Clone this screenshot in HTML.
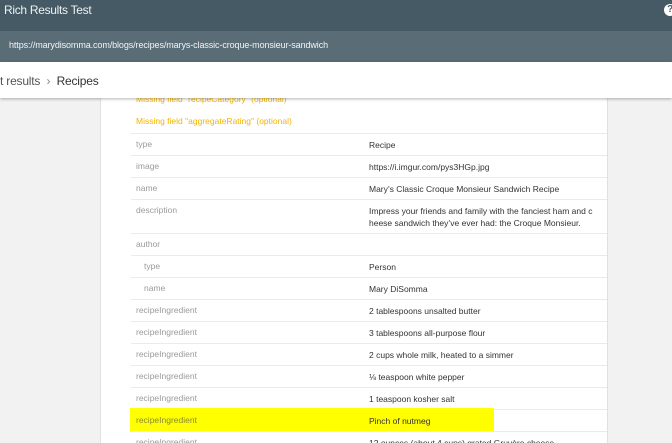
<!DOCTYPE html>
<html><head><style>
*{margin:0;padding:0;box-sizing:border-box}
html,body{width:672px;height:443px;overflow:hidden}
body{background:#f2f2f2;font-family:"Liberation Sans",sans-serif;position:relative}
.top{position:absolute;left:0;top:0;width:672px;height:31px;background:#455a64;color:#eef1f2;font-size:12px;letter-spacing:-0.3px;padding:3px 0 0 4px}
.url{position:absolute;left:0;top:31px;width:672px;height:31px;background:#5a6d77;color:#f2f4f5;font-size:9px;letter-spacing:-0.1px;padding:9px 0 0 9px}
.q{position:absolute;right:-4px;top:4px;width:12px;height:12px;border-radius:50%;background:#fff;color:#455a64;font-size:10px;font-weight:bold;text-align:center;line-height:12px}
.bc{position:absolute;left:0;top:62px;width:672px;height:36px;background:#fff;box-shadow:0 1px 3px rgba(0,0,0,.3);font-size:12px;color:#555;padding:12px 0 0 0;z-index:2;letter-spacing:-0.2px}
.bc b{font-weight:normal;color:#333}
.card{position:absolute;left:100px;top:90px;width:508px;height:360px;background:#fff;border-left:1px solid #e0e0e0;border-right:1px solid #e0e0e0}
.r{position:absolute;left:131px;width:476px;border-top:1px solid #ebebeb;font-size:8.5px}
.k{position:absolute;left:5px;color:#9a9a9a}
.v{position:absolute;left:238px;color:#333;line-height:12px}
.o{position:absolute;left:136px;font-size:8.5px;color:#f4b400}
.hl{position:absolute;left:130px;top:408px;width:364px;height:24px;background:#ffff00}
</style></head><body>
<div class="top">Rich Results Test<div class="q">?</div></div>
<div class="url">https://marydisomma.com/blogs/recipes/marys-classic-croque-monsieur-sandwich</div>
<div class="bc">t results &nbsp;<span style="color:#888">&#8250;</span>&nbsp; <b>Recipes</b></div>
<div class="card"></div>
<div class="o" style="top:94px">Missing field "recipeCategory" (optional)</div>
<div class="o" style="top:116px">Missing field "aggregateRating" (optional)</div>
<div class="hl"></div>
<div class="r" style="top:133px;height:22px"><span class="k" style="top:5px">type</span><span class="v" style="top:5px">Recipe</span></div>
<div class="r" style="top:155px;height:22px"><span class="k" style="top:5px">image</span><span class="v" style="top:5px">https://i.imgur.com/pys3HGp.jpg</span></div>
<div class="r" style="top:177px;height:22px"><span class="k" style="top:5px">name</span><span class="v" style="top:5px">Mary’s Classic Croque Monsieur Sandwich Recipe</span></div>
<div class="r" style="top:199px;height:34px"><span class="k" style="top:5px">description</span><span class="v" style="top:5px">Impress your friends and family with the fanciest ham and c<br>heese sandwich they’ve ever had: the Croque Monsieur.</span></div>
<div class="r" style="top:233px;height:22px"><span class="k" style="top:5px">author</span></div>
<div class="r" style="top:255px;height:22px"><span class="k" style="top:5px;left:13px">type</span><span class="v" style="top:5px">Person</span></div>
<div class="r" style="top:277px;height:22px"><span class="k" style="top:5px;left:13px">name</span><span class="v" style="top:5px">Mary DiSomma</span></div>
<div class="r" style="top:299px;height:22px"><span class="k" style="top:5px">recipeIngredient</span><span class="v" style="top:5px">2 tablespoons unsalted butter</span></div>
<div class="r" style="top:321px;height:22px"><span class="k" style="top:5px">recipeIngredient</span><span class="v" style="top:5px">3 tablespoons all-purpose flour</span></div>
<div class="r" style="top:343px;height:22px"><span class="k" style="top:5px">recipeIngredient</span><span class="v" style="top:5px">2 cups whole milk, heated to a simmer</span></div>
<div class="r" style="top:365px;height:22px"><span class="k" style="top:5px">recipeIngredient</span><span class="v" style="top:5px">⅛ teaspoon white pepper</span></div>
<div class="r" style="top:387px;height:22px"><span class="k" style="top:5px">recipeIngredient</span><span class="v" style="top:5px">1 teaspoon kosher salt</span></div>
<div class="r" style="top:409px;height:22px"><span class="k" style="top:5px;color:#8a8a30">recipeIngredient</span><span class="v" style="top:5px">Pinch of nutmeg</span></div>
<div class="r" style="top:431px;height:22px"><span class="k" style="top:5px">recipeIngredient</span><span class="v" style="top:5px">12 ounces (about 4 cups) grated Gruyère cheese</span></div>
</body></html>
